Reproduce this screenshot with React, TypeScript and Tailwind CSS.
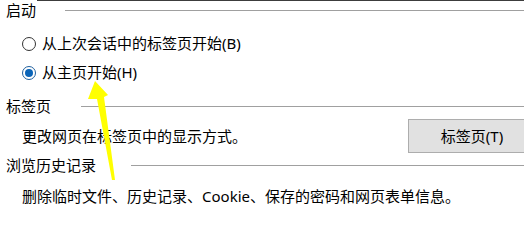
import React from 'react';

const font = { fontFamily: '"Noto Sans", "Noto Sans CJK SC", sans-serif' };

function SectionHeader({ title, gap }: { title: string; gap: string }) {
  return (
    <div className="flex h-[18px] items-center pl-[6px]">
      <span className="shrink-0 text-[15px] leading-none text-black">{title}</span>
      <div className={`h-px flex-1 bg-[#a0a0a0] ${gap}`} />
    </div>
  );
}

function Radio({ label, checked }: { label: string; checked?: boolean }) {
  return (
    <label className="flex h-[29px] items-center pl-[22px]">
      <span
        className={`flex h-[14px] w-[14px] shrink-0 items-center justify-center rounded-full border bg-white ${
          checked ? 'border-[#1f5f9e]' : 'border-[#333333]'
        }`}
      >
        {checked && <span className="h-[8px] w-[8px] rounded-full bg-[#0a64b8]" />}
      </span>
      <span className="ml-[6px] text-[15px] leading-none text-black">{label}</span>
    </label>
  );
}

export default function App() {
  return (
    <div className="relative h-[216px] w-[524px] overflow-hidden bg-white" style={font}>
      {/* window edge */}
      <div className="flex h-px">
        <div className="w-[37px]" />
        <div className="flex-1 bg-[#3c3c3c]" />
      </div>

      <SectionHeader title="启动" gap="ml-[29px]" />

      <div className="mt-[10px]">
        <Radio label="从上次会话中的标签页开始(B)" />
        <Radio label="从主页开始(H)" checked />
      </div>

      <div className="mt-[10px]">
        <SectionHeader title="标签页" gap="ml-[30px]" />
      </div>

      <div className="mt-[4px] flex h-[34px] items-center pl-[22px]">
        <span className="flex-1 text-[15px] leading-none text-black">更改网页在标签页中的显示方式。</span>
        <button className="-mr-[12px] h-[34px] w-[128px] shrink-0 border border-[#adadad] bg-[#e1e1e1] text-[15px] leading-none text-black">
          标签页(T)
        </button>
      </div>

      <div className="mt-[3px]">
        <SectionHeader title="浏览历史记录" gap="ml-[35px]" />
      </div>

      <div className="mt-[12px] flex h-[20px] items-center pl-[22px]">
        <span className="text-[15px] leading-none text-black">
          删除临时文件、历史记录、Cookie、保存的密码和网页表单信息。
        </span>
      </div>

      {/* annotation arrow */}
      <svg
        className="pointer-events-none absolute left-0 top-0"
        width="524"
        height="216"
        viewBox="0 0 524 216"
      >
        <polygon
          points="95,81 108,95 104,97 115,180 112,180 97,99 88,99"
          fill="#ffff00"
        />
      </svg>
    </div>
  );
}
